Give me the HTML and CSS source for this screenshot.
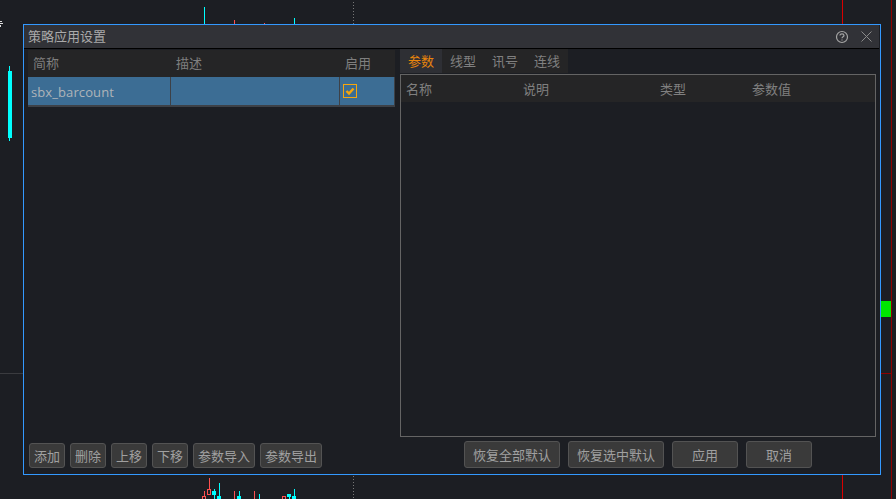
FILE: index.html
```html
<!DOCTYPE html>
<html lang="zh">
<head>
	<meta charset="UTF-8">
	<title>策略应用设置</title>
	<link rel="stylesheet" href="styles.css">
</head>
<body>
	<div class="stage">
		<svg class="chart" width="896" height="499" viewBox="0 0 896 499">
			<g class="up">
				<rect x="204" y="7" width="1" height="17"/>
				<rect x="294" y="18" width="1" height="6"/>
				<rect x="9" y="66" width="1" height="75"/>
				<rect x="8" y="71" width="4" height="67"/>
				<rect x="214" y="489" width="1" height="10"/>
				<rect x="212" y="491" width="4" height="4"/>
				<rect x="219" y="483" width="1" height="13"/>
				<rect x="217" y="496" width="4" height="3"/>
				<rect x="239" y="491" width="1" height="5"/>
				<rect x="237" y="496" width="4" height="3"/>
				<rect x="259" y="494" width="1" height="5"/>
				<rect x="287" y="494" width="4" height="3"/>
				<rect x="289" y="497" width="1" height="2"/>
				<rect x="294" y="489" width="1" height="7"/>
				<rect x="292" y="496" width="4" height="3"/>
			</g>
			<g class="down">
				<rect x="234" y="20" width="1" height="4"/>
				<rect x="264" y="23" width="1" height="1"/>
				<rect x="209" y="478" width="1" height="11"/>
				<rect x="204" y="491" width="1" height="5"/>
				<rect x="234" y="491" width="1" height="8"/>
				<rect x="254" y="491" width="1" height="8"/>
			</g>
			<g class="hollow">
				<rect x="207.500" y="489.500" width="3" height="5"/>
				<rect x="202.500" y="496.500" width="3" height="4"/>
				<rect x="282.500" y="496.500" width="3" height="4"/>
			</g>
			<path class="dots" d="M353.500 2V24M353.500 476V499"/>
			<path class="cross" d="M842.500 0V24M842.500 475V499"/>
			<path class="edge" d="M891.500 0V499M881 373.500H891"/>
			<path class="grid-line" d="M0 373.500H23"/>
			<rect class="vol" x="881" y="301" width="10" height="16"/>
			<path class="tick" d="M0 21.500H2M0 23.500H3M0.500 25V27"/>
		</svg>

		<div class="dialog">
			<div class="titlebar">
				<span class="title">策略应用设置</span>
				<svg class="help" width="14" height="14" viewBox="0 0 14 14">
					<circle cx="7" cy="7" r="5.500"/>
					<path d="M5 5.500C5 4.300 5.900 3.800 7 3.800S9 4.400 9 5.400C9 6.700 7 6.700 7 8.300"/>
					<path d="M7 9.500V10.500"/>
				</svg>
				<svg class="close" width="11" height="11" viewBox="0 0 11 11">
					<path d="M0.500 0.500L10.500 10.500M10.500 0.500L0.500 10.500"/>
				</svg>
			</div>
			<div class="body">
				<div class="left">
					<div class="list-head">
						<span>简称</span>
						<span>描述</span>
						<span>启用</span>
					</div>
					<div class="list-row">
						<span class="cell cell-name">sbx_barcount</span>
						<span class="cell"></span>
						<span class="cell cell-check">
							<svg width="14" height="14" viewBox="0 0 14 14">
								<rect x="0.500" y="0.500" width="13" height="13"/>
								<path d="M3.500 7L6 9.500L10.500 4.500"/>
							</svg>
						</span>
					</div>
					<div class="left-actions">
						<button class="btn btn-s">添加</button>
						<button class="btn btn-s">删除</button>
						<button class="btn btn-s">上移</button>
						<button class="btn btn-s">下移</button>
						<button class="btn btn-m">参数导入</button>
						<button class="btn btn-m">参数导出</button>
					</div>
				</div>
				<div class="right">
					<div class="tabs">
						<span class="tab active">参数</span>
						<span class="tab">线型</span>
						<span class="tab">讯号</span>
						<span class="tab">连线</span>
					</div>
					<div class="panel">
						<div class="panel-head">
							<span>名称</span>
							<span>说明</span>
							<span>类型</span>
							<span>参数值</span>
						</div>
					</div>
					<div class="right-actions">
						<button class="btn btn-l">恢复全部默认</button>
						<button class="btn btn-l">恢复选中默认</button>
						<button class="btn btn-w">应用</button>
						<button class="btn btn-w">取消</button>
					</div>
				</div>
			</div>
		</div>
	</div>
</body>
</html>
```

FILE: styles.css
```css
html, body {
	margin: 0;
	padding: 0;
	background: #1c1e23;
}
body {
	font-family: "Noto Sans CJK SC", "Noto Sans", sans-serif;
	font-size: 13px;
	color: #979797;
}
.stage {
	position: relative;
	width: 896px;
	height: 499px;
	overflow: hidden;
}

/* chart behind the dialog */
.chart {
	position: absolute;
	left: 0;
	top: 0;
}
.up { fill: #00ffff; }
.down { fill: #ff4f4f; }
.hollow {
	fill: none;
	stroke: #ff4f4f;
}
.dots {
	stroke: #777;
	stroke-dasharray: 1 2;
}
.cross { stroke: #d90000; }
.edge { stroke: #8e0000; }
.grid-line { stroke: #3a3b3f; }
.vol { fill: #00e600; }
.tick { stroke: #ddd; }

/* dialog */
.dialog {
	position: absolute;
	left: 23px;
	top: 24px;
	width: 858px;
	height: 451px;
	box-sizing: border-box;
	border: 1px solid #3399ff;
	background: #1c1e23;
	display: flex;
	flex-direction: column;
}
.titlebar {
	height: 23px;
	flex: none;
	display: flex;
	align-items: center;
	background: #313237;
	border-bottom: 1px solid #000;
	margin-right: 1px;
	padding-left: 4px;
	padding-right: 7px;
}
.title {
	flex: 1;
	padding-bottom: 2px;
	color: #aaa;
}
.help {
	margin-right: 12px;
}
.help circle, .help path {
	fill: none;
	stroke: #a5a5a5;
	stroke-width: 1.200;
}
.close path {
	fill: none;
	stroke: #8a8a8a;
}

.body {
	flex: 1;
	display: flex;
	gap: 5px;
	padding: 0 4px 6px;
	min-height: 0;
}
.left {
	width: 367px;
	display: flex;
	flex-direction: column;
}
.right {
	width: 476px;
	display: flex;
	flex-direction: column;
}

/* strategy list */
.list-head {
	height: 27px;
	margin-top: 1px;
	display: grid;
	grid-template-columns: 143px 169px 55px;
	align-items: center;
	background: #252526;
	color: #7f7f7f;
}
.list-head span {
	padding-left: 5px;
	padding-bottom: 2px;
}
.list-row {
	height: 30px;
	box-sizing: border-box;
	display: grid;
	grid-template-columns: 143px 169px 55px;
	background: #3c6d94;
	border-bottom: 2px solid #3d4147;
	color: #aeb4b9;
}
.cell {
	display: flex;
	align-items: center;
	border-right: 1px solid #3d4147;
}
.cell-name {
	padding-left: 3px;
	padding-top: 2px;
	letter-spacing: 0.1px;
	font-family: "Open Sans", "Noto Sans", sans-serif;
}
.cell-check {
	padding-left: 3px;
}
.cell-check rect {
	fill: none;
	stroke: #f7a60c;
}
.cell-check path {
	fill: none;
	stroke: #f7a60c;
	stroke-width: 2.400;
}
.left-actions {
	margin-top: auto;
	margin-left: 1px;
	display: flex;
	gap: 5px;
}

/* params panel */
.tabs {
	height: 25px;
	flex: none;
	display: flex;
}
.tab {
	width: 42px;
	height: 24px;
	line-height: 24px;
	text-align: center;
	background: #252526;
	color: #808080;
}
.tab.active {
	background: #2e2f34;
	color: #e8850c;
}
.panel {
	flex: none;
	height: 363px;
	box-sizing: border-box;
	border: 1px solid #646464;
}
.panel-head {
	height: 27px;
	display: grid;
	grid-template-columns: 117px 137px 92px 1fr;
	align-items: center;
	padding-left: 5px;
	background: #252526;
	color: #808080;
}
.right-actions {
	margin-top: 4px;
	padding-left: 64px;
	display: flex;
	gap: 8px;
}

/* buttons */
.btn {
	height: 25px;
	padding: 0;
	box-sizing: border-box;
	border: 1px solid #535353;
	border-radius: 3px;
	background: #3a3a3a;
	color: #a0a0a0;
	font-family: inherit;
	font-size: 13px;
	line-height: 1;
}
.btn-s { width: 36px; }
.btn-m { width: 62px; }
.btn-l, .btn-w { height: 27px; }
.btn-l { width: 96px; }
.btn-w { width: 66px; }
```
